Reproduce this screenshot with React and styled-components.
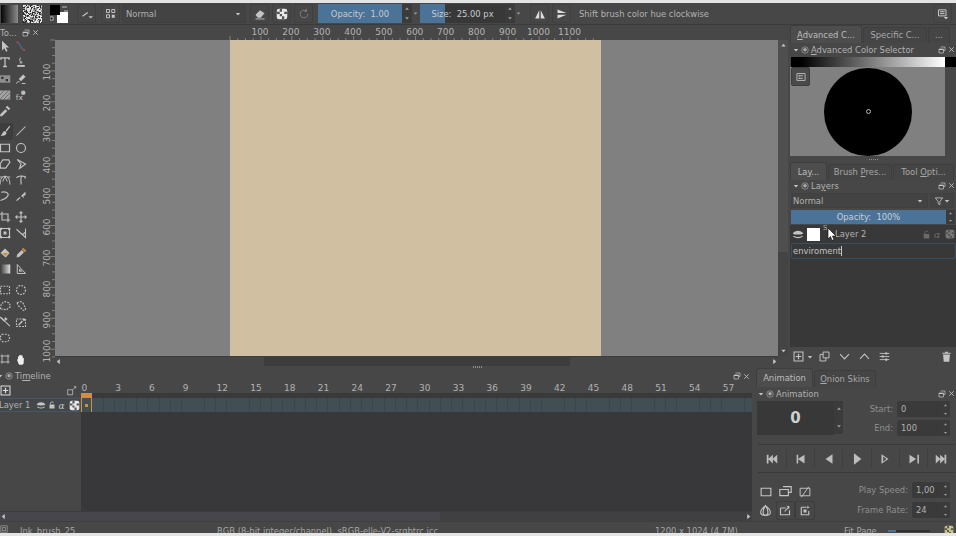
import React from "react";
import styled, { createGlobalStyle } from "styled-components";

const GlobalStyle = createGlobalStyle`
  html, body { margin: 0; padding: 0; background: #e4e4e4; }
  body { font-family: "DejaVu Sans", "Liberation Sans", sans-serif; font-size: 8.4px; color: #b2b2b2; }
  * { box-sizing: border-box; }
`;

// icon drawings, all in a 16x16 box
const L = (d, w = 1.4) => <path d={d} fill="none" stroke="currentColor" strokeWidth={w} />;
const F = (d) => <path d={d} fill="currentColor" />;
const D = (d) => <path d={d} fill="none" stroke="currentColor" strokeWidth="1.5" strokeDasharray="2.4 1.6" />;

const icons = {
  arrow: F("M4 1v13l3-3 2.4 4.6 2-1L9 10h4.4z"),
  nodes: (<><path d="M3 3c5 0 3 9 9 10" fill="none" stroke="#4a6f9c" strokeWidth="1.4" /><rect x="2" y="2" width="2.4" height="2.4" fill="#b04a42" /><rect x="11" y="12" width="2.4" height="2.4" fill="#b04a42" /></>),
  text: <>{L("M2.5 5V2.5h11V5M8 2.5V14M5.5 14h5", 1.7)}</>,
  stamp: (<>{F("M3 12h10v2.5H3z")}{L("M8 2.5c-2 0-2 3 -1 4.5v3M9 7v3", 1.3)}</>),
  ref: (<><rect x="1" y="3" width="14" height="10" fill="#8f8f8f" /><rect x="3" y="5" width="3" height="3" fill="#333" /><rect x="9" y="8" width="3" height="3" fill="#333" /></>),
  brushedit: <>{F("M11 2l3 3-6 6-3-3z")}{L("M2 14c1-3 3-3 4-2M9 14h5", 1.3)}</>,
  pattern: (<><rect x="1" y="2" width="14" height="12" fill="#a5a5a5" /><path d="M1 8l6-6M1 14L13 2M6 14l9-9M11 14l4-4" fill="none" stroke="#555" /></>),
  fx: (<><text x="1" y="15" fontSize="10" fontFamily="DejaVu Sans" fill="currentColor">fx</text><circle cx="11" cy="5" r="3" fill="#bbb" /></>),
  dropper: <>{F("M1.5 12.5l7-7 2.5 2.5-7 7H1.5z")}{F("M9 3l2-2 4 4-2 2z")}</>,
  brush: <>{F("M9 7l5-6 1 1-5 7z")}{F("M8 8c-3 0-3 4-6 6 4 1 8 0 8-4z")}</>,
  line: L("M2 14L14 2"),
  rect: L("M2 3h12v10H2z", 1.6),
  circle: <circle cx="8" cy="8" r="6" fill="none" stroke="currentColor" strokeWidth="1.5" />,
  poly: L("M5 2.5h8l1.5 3L9 13.5H2L1.5 8z", 1.5),
  polyline: L("M3 2l11 6-8 6 2-6z", 1.5),
  bez: L("M1.5 14c0-8 3-11 6.5-11s6.5 3 6.5 11M1 4h4M11 4h4M5 10l3-7 3 7", 1.3),
  freepath: L("M2 5c3-3 9-3 12-1M9 3c-3 4 0 6-1 11M13 6l1-2-2-1", 1.5),
  dyna: L("M3 3c8-2 12 3 7 7-2 2-5 3-8 4", 1.6),
  multi: <>{F("M8 8l6-6v5l-3 1 1 3z")}{L("M2 14c2-1 3-3 5-4", 1.5)}</>,
  crop: L("M4 1v11h11M1 4h11v11", 1.5),
  move: <>{L("M8 2v12M2 8h12", 1.5)}{F("M8 0l3 3H5zM8 16l-3-3h6zM0 8l3-3v6zM16 8l-3 3V5z")}</>,
  transform: (<>{L("M2 2h12v12H2z", 1.5)}{F("M6 6h4v4H6zM1 1h3v3H1zM12 1h3v3h-3zM1 12h3v3H1zM12 12h3v3h-3z")}</>),
  measure: L("M2 3l12 11V2M14 7l-4 3", 1.4),
  fill: <>{F("M8 2l6 6-5 6-7-6z")}<path d="M4 8h8l-3 4z" fill="#d08a3c" /></>,
  picker: <>{F("M2 14l1-4 6-6 3 3-6 6z")}<path d="M9 3l2-2 4 4-2 2z" fill="#d08a3c" /></>,
  grad: (<><defs><linearGradient id="gr"><stop offset="0" stopColor="#333" /><stop offset="1" stopColor="#ddd" /></linearGradient></defs><rect x="1" y="2" width="14" height="12" fill="url(#gr)" /></>),
  ruler: L("M3 14V2l11 12zM6 11V8l3 3z", 1.3),
  srect: D("M2 3h12v10H2z"),
  scirc: <circle cx="8" cy="8" r="6" fill="none" stroke="currentColor" strokeWidth="1.5" strokeDasharray="2.4 1.6" />,
  spoly: D("M2 12l1-7 5-3 6 2 1 5-5 4z"),
  sfree: D("M3 4c3-3 7-2 8 1s3 4 3 7-4 2-5 0-6-4-6-8z"),
  wand: <>{F("M1 2l6 6 1.5-1.5-6-6zM8 8l6 6 1-1-6-6z")}{F("M9 1l1 2 2 1-2 1-1 2-1-2-2-1 2-1z")}</>,
  ssimilar: <>{D("M2 4h12v10H2z")}{F("M4 12l5-6 1.5 1.5L5 13zM10 5l2-2 2 2-2 2z")}</>,
  sbez: D("M4 3h7c4 2 4 7 0 10H5C1 10 1 6 4 3z"),
  grid: L("M4 2v12M12 2v12M2 4h12M2 12h12", 1.2),
  hand: F("M4 8V5c0-1 1.500-1 1.500 0V3.500c0-1 1.500-1 1.500 0V3c0-1 1.700-1 1.700 0v1c0-1 1.600-1 1.600 0v3c.6-.8 2-.4 1.500.8L11.500 14c-.5 1-1 1.500-2 1.500H7c-1.500 0-2-.5-2.500-2L3 10c-.4-1 .6-2.300 1-2z"),
  eraser: <>{F("M2 9l6-6 6 4-5 6H5z")}{F("M2 14h12v1.200H2z")}</>,
  checker: (<><rect x="1" y="1" width="14" height="14" rx="3" fill="currentColor" /><path d="M5 1h3v4H5zM11 5h4v3h-4zM5 8h3v3H5zM1 5h4v3H1zM8 11h3v4H8z" fill="#555" /></>),
  cycle: <path d="M13 8a5 5 0 1 1-2-4M11 1.500V4.500H8" fill="none" stroke="currentColor" strokeWidth="1.2" strokeDasharray="2.200 .8" />,
  mirrorH: <>{F("M7 3v11H1.500zM9 3v11h5.500z")}</>,
  mirrorV: <>{F("M2 2l12 4.500H2zM2 9h12L2 14z")}</>,
  wsMenu: <>{L("M2 2.500h10v8H2zM4 5h6M4 7.500h6", 1.300)}{F("M9 12h6l-3 3z")}</>,
  dash: <>{L("M1.500 2.500h13v11h-13zM5 6h6M5 10h6", 1.400)}{F("M4 5h2v2H4zM4 9h2v2H4z")}</>,
  brushMode: <>{L("M2 11l7-5", 1.500)}{F("M10 11h6l-3 3z")}</>,
  palette: (<>{L("M2 2h4v4H2zM9 2h4v4H9zM2 9h4v4H2z", 1.300)}{F("M9 9h4v4H9z")}</>),
  float: <>{L("M5 2h9v7H11M2 6h9v8H2z", 1.400)}{F("M2 6h9v2H2z")}</>,
  close: L("M3 3l10 10M13 3L3 13", 2),
  dockmark: <><circle cx="8" cy="8" r="6.500" fill="none" stroke="currentColor" strokeWidth="1.300" /><circle cx="8" cy="7.500" r="3.500" fill="currentColor" /></>,
  eye: <>{F("M1 7.500c3-5 11-5 14 0-3 1.500-11 1.500-14 0z")}{L("M2 11c4 2.500 8 2.500 12 0", 1.500)}</>,
  lock: <>{F("M3 7h10v8H3z")}{L("M5 7V4c0-3 6-3 6 0", 1.500)}</>,
  alpha: <text x="1" y="14" fontSize="16" fontStyle="italic" fontFamily="DejaVu Serif" fill="currentColor">α</text>,
  filter: L("M2 3h12L9.500 8.500V14l-3-2V8.500z", 1.300),
  add: <>{L("M1.500 1.500h13v13h-13z", 1.500)}{L("M8 4v8M4 8h8", 1.800)}</>,
  dup: L("M6 1.500h8.500V10H6zM6 5H1.500v9.500H10V10", 1.400),
  down: L("M1.500 4.500L8 11.500l6.500-7", 1.500),
  up: L("M1.500 11.500L8 4.500l6.500 7", 1.500),
  props: <>{L("M1 3.500h14M1 8h14M1 12.500h14", 1.300)}{F("M9 2h3v3H9zM4 6.500h3v3H4zM9 11h3v3H9z")}</>,
  trash: <>{F("M3 5h10l-1 10.500H4zM2 2.500h12v1.500H2zM6 1h4v1.500H6z")}</>,
  zoomFit: <>{L("M1 6h8v8H1z", 1.200)}{L("M9 6l5-5M11 1h3v3", 1.200)}</>,
  first: <>{F("M2 3h2v10H2zM14 3v10L8.500 8zM9 3v10L3.500 8z")}</>,
  prevKey: <>{F("M12 3v10L4.500 8zM3 3h1.800v10H3z")}</>,
  prev: F("M12 2.500v11L4 8z"),
  play: F("M4.500 1.500v13L13 8z"),
  next: <>{F("M4 2.500v11L12 8z")}<path d="M6 5v6l3.500-3z" fill="#474747" /></>,
  nextKey: <>{F("M4 3v10l7.500-5zM13 3h1.800v10H13z")}</>,
  last: <>{F("M2 3v10l5.500-5zM7 3v10l5.500-5zM12 3h2v10h-2z")}</>,
  aRect: L("M1.500 3h13v10h-13z", 1.500),
  aDup: L("M5 2h10v7H12M1 5.500h10.500V13H1z", 1.400),
  aDel: <>{L("M1.500 3h13v10h-13z", 1.300)}{L("M3 15L13 1", 1.300)}</>,
  onion: <>{L("M8 2c-4 3-6 6-6 8s2 4 6 4 6-2 6-4-2-5-6-8zM8 2c-2 3-3 6-3 8s1 4 3 4 3-2 3-4-1-5-3-8z", 1.300)}</>,
  aMark: <>{L("M2 4h7M2 4v9h12V7", 1.500)}{F("M10 1l4 .5-.5 4zM7 8l5-5 1 1-5 5z")}</>,
  aLoop: <>{L("M3 3h7M3 3v10h10V8", 1.500)}{F("M11 1l3 2-3 2zM6 6h4v4H6z")}</>,
  status: L("M1.500 1.500h13v13h-13zM5 5h6v6H5z", 1),
  spinUp: F("M8 4l5 6H3z"),
  spinDown: F("M8 12L3 6h10z"),
  tri: F("M2 5h12l-6 7z"),
  triLeft: F("M11 2v12L4 8z"),
  triRight: F("M5 2v12l7-6z"),
};

const Icon = ({ n, s = 12, c }) => (
  <Glyph viewBox="0 0 16 16" $s={s} $c={c}>
    {icons[n]}
  </Glyph>
);

const Glyph = styled.svg`
  width: ${(p) => p.$s}px;
  height: ${(p) => p.$s}px;
  flex: none;
  color: ${(p) => p.$c || "#c4c4c4"};
`;

const Page = styled.div`
  width: 956px;
  height: 536px;
  overflow: hidden;
  display: flex;
  flex-direction: column;
  background: #474747;
  border-top: 3px solid #e4e4e4;
  border-bottom: 3px solid #e4e4e4;
`;

/* top toolbar */
const Toolbar = styled.div`
  height: 22px;
  flex: none;
  display: flex;
  align-items: center;
  padding: 0 4px 0 1px;
  background: #474747;
  border-bottom: 1px solid #3b3b3b;
`;

const Preview = styled.div`
  width: ${(p) => p.$w}px;
  height: 18px;
  margin-right: ${(p) => p.$mr || 0}px;
  background: ${(p) => p.$bg};
`;

const NoiseSwatch = styled.svg`
  width: 19px;
  height: 18px;
  flex: none;
`;

const ColorSwap = styled.svg`
  width: 18px;
  height: 18px;
  flex: none;
  margin-left: 8px;
`;

const ToolButton = styled.div`
  width: ${(p) => p.$w || 19}px;
  height: 19px;
  flex: none;
  margin-left: ${(p) => p.$ml || 0}px;
  display: flex;
  align-items: center;
  justify-content: center;
  border: 1px solid #404040;
  border-radius: 2px;
`;

const Combo = styled.div`
  height: ${(p) => p.$h || 19}px;
  width: ${(p) => p.$w}px;
  flex: none;
  margin-left: ${(p) => p.$ml || 0}px;
  padding: 0 4px 0 ${(p) => p.$pl ?? 3}px;
  display: flex;
  align-items: center;
  justify-content: space-between;
  border: 1px solid #404040;
  border-radius: 2px;
  background: #434343;
`;

const Slider = styled.div`
  width: ${(p) => p.$w}px;
  height: 19px;
  flex: none;
  margin-left: ${(p) => p.$ml || 0}px;
  display: flex;
  align-items: center;
  justify-content: center;
  color: #c6ccd2;
  background: linear-gradient(to right, #4b7397 ${(p) => p.$fill}%, #383838 ${(p) => p.$fill}%);
`;

const Spin = styled.div`
  width: ${(p) => p.$w || 10}px;
  height: ${(p) => p.$h || 19}px;
  flex: none;
  display: flex;
  flex-direction: column;
  align-items: center;
  justify-content: space-around;
  background: ${(p) => p.$bg || "#3b3b3b"};
`;

const SmallArrow = styled.div`
  width: 6px;
  flex: none;
  margin-right: ${(p) => p.$mr || 0}px;
  display: flex;
  justify-content: center;
`;

const Hint = styled.span`
  margin-left: 8px;
  flex: 1;
`;

/* upper part */
const Upper = styled.div`
  height: 343px;
  flex: none;
  display: flex;
  position: relative;
`;

const ToolDock = styled.div`
  width: 41px;
  flex: none;
  overflow: hidden;
`;

const DockTitle = styled.div`
  height: ${(p) => p.$h || 13}px;
  margin-left: ${(p) => p.$ml || 0}px;
  padding: ${(p) => p.$pad || "0 2px 0 3px"};
  display: flex;
  align-items: center;
  gap: ${(p) => p.$gap || 2}px;
  white-space: nowrap;
`;

const TitleFill = styled.span`
  flex: 1;
`;

const ToolGroups = styled.div`
  display: flex;
  flex-direction: column;
  gap: 4px;
  margin-left: -3px;
`;

const ToolGroup = styled.div`
  display: grid;
  grid-template-columns: 16px 16px;
  grid-auto-rows: 16.25px;
`;

const ToolCell = styled.div`
  display: flex;
  align-items: center;
  justify-content: center;
  border-radius: 2px;
  background: ${(p) => (p.$active ? "#3d3d3d" : "transparent")};
`;

const CanvasPane = styled.div`
  width: 749px;
  flex: none;
  display: flex;
  flex-direction: column;
`;

const TopRuler = styled.svg`
  width: 739px;
  height: 15px;
  flex: none;
  display: block;
`;

const CanvasRow = styled.div`
  height: 316px;
  flex: none;
  display: flex;
`;

const LeftRuler = styled.svg`
  width: 14px;
  height: 316px;
  flex: none;
  overflow: visible;
`;

const View = styled.div`
  width: 723px;
  flex: none;
  padding-left: 175px;
  background: #808080;
`;

const Sheet = styled.div`
  width: 371px;
  height: 100%;
  background: #d1bfa1;
`;

const VScroll = styled.div`
  width: 10px;
  flex: none;
  display: flex;
  flex-direction: column;
  align-items: center;
  justify-content: space-between;
  padding: 2px 0;
  background: linear-gradient(#4f4f4f 67%, #444 67%);
`;

const HScroll = styled.div`
  height: ${(p) => p.$h || 10}px;
  flex: none;
  margin: 0 ${(p) => p.$mr || 0}px 0 ${(p) => p.$ml || 0}px;
  display: flex;
  align-items: center;
  justify-content: space-between;
  background: ${(p) => p.$bg};
  border-top: 1px solid #3c3c3c;
`;

const Dots = styled.div`
  position: absolute;
  left: ${(p) => p.$x}px;
  top: ${(p) => p.$y}px;
  width: 9px;
  height: 2px;
  background: repeating-linear-gradient(to right, #8a8a8a 0 1px, transparent 1px 2px);
`;

/* right docks */
const RightDock = styled.div`
  width: 166px;
  flex: none;
  display: flex;
  flex-direction: column;
`;

const Tabs = styled.div`
  height: ${(p) => p.$h || 18}px;
  flex: none;
  padding-left: ${(p) => p.$pl || 0}px;
  display: flex;
  gap: 1px;
  align-items: flex-end;
`;

const Tab = styled.div`
  width: ${(p) => p.$w}px;
  height: ${(p) => (p.$active ? 100 : 90)}%;
  flex: none;
  display: flex;
  align-items: center;
  justify-content: center;
  white-space: nowrap;
  border: 1px solid #3e3e3e;
  border-bottom: none;
  border-radius: 3px 3px 0 0;
  background: ${(p) => (p.$active ? "#4d4d4d" : "#454545")};
  color: ${(p) => (p.$active ? "#bdbdbd" : "#a8a8a8")};
`;

const Under = styled.u`
  text-underline-offset: 1px;
`;

const SelectorBar = styled.div`
  height: 10px;
  flex: none;
  margin: 1px 0 0 1px;
  background: linear-gradient(to right, #000 0, #000 10px, #fff 154px, #000 154px, #000 165px);
`;

const SelectorArea = styled.div`
  height: 89px;
  width: 155px;
  flex: none;
  position: relative;
  display: flex;
  align-items: center;
  justify-content: center;
  background: #808080;
`;

const Wheel = styled.div`
  width: 88px;
  height: 88px;
  border-radius: 50%;
  margin-left: 1px;
  background: #000;
  display: flex;
  align-items: center;
  justify-content: center;
`;

const WheelRing = styled.div`
  width: 5px;
  height: 5px;
  border-radius: 50%;
  border: 1px solid #b5b5b5;
`;

const FloatButton = styled.div`
  position: absolute;
  left: 1px;
  top: 0;
  width: 19px;
  height: 19px;
  display: flex;
  align-items: center;
  justify-content: center;
  background: #4a4a4a;
  border: 1px solid #3d3d3d;
  border-radius: 2px;
`;

const Handle = styled.div`
  height: 6px;
  flex: none;
  display: flex;
  align-items: center;
  justify-content: center;
`;

const HandleDots = styled.div`
  width: 9px;
  height: 1px;
  background: repeating-linear-gradient(to right, #8a8a8a 0 1px, transparent 1px 2px);
`;

const ComboRow = styled.div`
  height: 15px;
  flex: none;
  padding: 0 1px;
  display: flex;
  gap: 2px;
`;

const OpacityRow = styled.div`
  height: 14px;
  flex: none;
  margin: 2px 1px 1px;
  display: flex;
`;

const OpacityBar = styled.div`
  flex: 1;
  display: flex;
  align-items: center;
  justify-content: center;
  background: #4b7397;
  color: #c9d0d6;
`;

const LayerList = styled.div`
  height: 122px;
  flex: none;
  background: #383838;
`;

const LayerRow = styled.div`
  height: 18px;
  position: relative;
  display: flex;
  align-items: center;
  padding-left: 2px;
`;

const Thumb = styled.div`
  width: 13px;
  height: 13px;
  margin-left: 3px;
  background: #fff;
`;

const LayerName = styled.span`
  margin-left: 15px;
  flex: 1;
`;

const Cursor = styled.svg`
  position: absolute;
  left: 37px;
  top: 3px;
  width: 9px;
  height: 13px;
`;

const TypeMark = styled.span`
  position: absolute;
  left: 33px;
  top: -1px;
  font-size: 7px;
`;

const RowIcons = styled.div`
  display: flex;
  gap: ${(p) => p.$gap || 2}px;
  align-items: center;
  margin-right: ${(p) => p.$mr || 0}px;
`;

const RenameBox = styled.div`
  height: 16px;
  margin: 0 0 0 1px;
  padding-left: 1px;
  display: flex;
  align-items: center;
  color: #c4c4c4;
  border: 1px solid #3a4f60;
  border-radius: 2px;
`;

const Caret = styled.span`
  width: 1px;
  height: 10px;
  background: #c4c4c4;
`;

const LayerActions = styled.div`
  height: 17px;
  flex: none;
  display: flex;
  align-items: center;
  padding: 2px 5px 0 3px;
`;

const ActionIcon = styled.div`
  margin-left: ${(p) => p.$ml || 0}px;
  display: flex;
`;

/* lower part */
const Lower = styled.div`
  height: 153px;
  flex: none;
  display: flex;
  gap: 3px;
  position: relative;
`;

const TimelineDock = styled.div`
  width: 752px;
  flex: none;
  display: flex;
  flex-direction: column;
`;

const TimeHead = styled.div`
  height: 15px;
  flex: none;
  display: flex;
`;

const TimeHeadLeft = styled.div`
  width: 81px;
  flex: none;
  display: flex;
  justify-content: space-between;
  align-items: center;
  padding: 0 4px 0 0;
`;

const TimeRuler = styled.div`
  flex: 1;
  position: relative;
  display: flex;
  overflow: hidden;
  background: linear-gradient(#474747 10px, #3a3a3a 10px);
`;

const FrameLabel = styled.span`
  width: 33.75px;
  flex: none;
  line-height: 9px;
  padding-left: 0.5px;
  padding-top: 1px;
  font-size: 9px;
`;

const PlayHead = styled.div`
  position: absolute;
  left: 0;
  top: 10px;
  width: 11px;
  height: 5px;
  background: #d18f3a;
`;

const TimeLayer = styled.div`
  height: 14px;
  flex: none;
  display: flex;
`;

const TimeLayerLeft = styled.div`
  width: 81px;
  flex: none;
  display: flex;
  align-items: center;
  justify-content: space-between;
  padding-right: 0;
  color: #b2b2b2;
  background: #43474a;
  border: 1px solid #42586a;
  border-left: none;
  white-space: nowrap;
`;

const ClippedName = styled.span`
  margin-left: -1px;
`;

const Frames = styled.div`
  flex: 1;
  background: repeating-linear-gradient(to right, #414f55 0 10.25px, #3a4649 10.25px 11.25px);
`;

const CurrentFrame = styled.div`
  width: 11px;
  height: 100%;
  display: flex;
  align-items: center;
  justify-content: center;
  border-left: 1px solid #d18f3a;
  border-right: 1px solid #d18f3a;
`;

const Keyframe = styled.div`
  width: 3px;
  height: 3px;
  background: #d18f3a;
`;

const TimeEmpty = styled.div`
  flex: 1;
  display: flex;
`;

const EmptyLeft = styled.div`
  width: 81px;
  flex: none;
`;

const EmptyRight = styled.div`
  flex: 1;
  background: #38383a;
`;

const AnimDock = styled.div`
  width: 201px;
  flex: none;
  display: flex;
  flex-direction: column;
`;

const AnimTop = styled.div`
  height: 34px;
  flex: none;
  margin-top: 1px;
  padding: 0 6px 0 2px;
  display: flex;
  justify-content: space-between;
`;

const FrameBox = styled.div`
  width: 86px;
  display: flex;
`;

const FrameValue = styled.div`
  flex: 1;
  display: flex;
  align-items: center;
  justify-content: center;
  font-size: 15px;
  font-weight: bold;
  color: #d0d0d0;
  background: #383838;
`;

const Fields = styled.div`
  display: flex;
  flex-direction: column;
  gap: ${(p) => p.$gap || 2}px;
`;

const Field = styled.div`
  height: 16px;
  display: flex;
  align-items: center;
  justify-content: flex-end;
  gap: ${(p) => p.$gap || 4}px;
`;

const Dim = styled.span`
  color: #8f8f8f;
  white-space: nowrap;
`;

const Input = styled.div`
  width: ${(p) => p.$w}px;
  height: 16px;
  padding-left: 4px;
  display: flex;
  align-items: center;
  justify-content: space-between;
  border-radius: 2px;
  background: #3a3a3a;
`;

const Transport = styled.div`
  height: 29px;
  flex: none;
  margin: 9px 0 0 3px;
  width: 197px;
  display: flex;
  align-items: center;
  justify-content: space-between;
  border-top: 1px solid #3b3b3b;
  border-bottom: 1px solid #3b3b3b;
`;

const TransportCell = styled.div`
  width: 28px;
  height: 19px;
  display: flex;
  align-items: center;
  justify-content: center;
  border-left: ${(p) => (p.$first ? "none" : "1px solid #3f3f3f")};
`;

const AnimBottom = styled.div`
  flex: 1;
  margin-top: 9px;
  padding: 0 6px 0 1px;
  display: flex;
  justify-content: space-between;
`;

const IconGrid = styled.div`
  display: grid;
  grid-template-columns: repeat(3, 19.5px);
  grid-auto-rows: 19px;
`;

const IconCell = styled.div`
  display: flex;
  align-items: center;
  justify-content: center;
  border-radius: 2px;
  border: 1px solid ${(p) => (p.$boxed ? "#3d3d3d" : "transparent")};
`;

/* status bar */
const StatusBar = styled.div`
  height: 12px;
  flex: none;
  padding-top: 3px;
  display: flex;
  position: relative;
  overflow: hidden;
  line-height: 12px;
  color: #a6a6a6;
  border-top: 1px solid #3f3f3f;
`;

const StatusCell = styled.span`
  width: ${(p) => p.$w}px;
  flex: none;
  display: flex;
  align-items: flex-start;
  white-space: pre;
`;

const ZoomTrack = styled.div`
  width: 42px;
  height: 2px;
  margin: 5px 14px 0 0;
  background: linear-gradient(to right, #4b7397 20%, #2f2f2f 20%);
`;

const frameLabels = Array.from({ length: 20 }, (_, i) => i * 3);
const rulerMarks = Array.from({ length: 11 }, (_, i) => (i + 1) * 100);
const ticks = Array.from({ length: 57 }, (_, i) => i);

const toolGroups = [
  [["arrow", "nodes"], ["text", "stamp"], ["ref", "brushedit"], ["pattern", "fx"], ["dropper", null]],
  [["brush", "line"], ["rect", "circle"], ["poly", "polyline"], ["bez", "freepath"], ["dyna", "multi"]],
  [["crop", "move"], ["transform", "measure"]],
  [["fill", "picker"], ["grad", "ruler"]],
  [["srect", "scirc"], ["spoly", "sfree"], ["wand", "ssimilar"], ["sbez", null]],
  [["grid", "hand"]],
];

// dither noise for the pattern preview, a small fixed generator so it stays the same
const noise = [];
let seed = 7;
for (let y = 0; y < 18; y++) {
  for (let x = 0; x < 19; x++) {
    seed = (seed * 75 + 74) % 65537;
    noise.push({ x, y, v: seed % 3 });
  }
}
const noiseFill = ["#2a2a2a", "#8c8c8c", "#e6e6e6"];

const mainHandle = "linear-gradient(to right, #474747 28.9%, #3d3d3d 28.9%, #3d3d3d 71.2%, #474747 71.2%)";
const timeHandle = "linear-gradient(to right, #46464c 58.5%, #404042 58.5%)";

function Steppers({ w, h, bg, size = 6 }) {
  return (
    <Spin $w={w} $h={h} $bg={bg}>
      <Icon n="spinUp" s={size} c="#a0a0a0" />
      <Icon n="spinDown" s={size} c="#a0a0a0" />
    </Spin>
  );
}

function DockHead({ title, pad }) {
  return (
    <DockTitle $pad={pad}>
      <Icon n="tri" s={6} />
      <Icon n="dockmark" s={8} c="#aaa" />
      <span>{title}</span>
      <TitleFill />
      <Icon n="float" s={8} />
      <Icon n="close" s={7} />
    </DockTitle>
  );
}

function App() {
  return (
    <>
      <GlobalStyle />
      <Page>
        <Toolbar>
          <Preview $w={17} $mr={5} $bg="linear-gradient(to right, #050505, #8c8c8c)" />
          <NoiseSwatch viewBox="0 0 19 18">
            {noise.map((d, i) => (
              <rect key={i} x={d.x} y={d.y} width="1" height="1" fill={noiseFill[d.v]} />
            ))}
          </NoiseSwatch>
          <ColorSwap viewBox="0 0 18 18">
            <rect x="7" y="7" width="11" height="11" fill="#fff" />
            <rect x="0" y="0" width="10" height="10" fill="#000" />
            <path d="M12 2h5M14 6h4" stroke="#bbb" />
            <rect x="0" y="12" width="3" height="3" fill="#000" stroke="#ddd" strokeWidth=".8" />
          </ColorSwap>
          <ToolButton $ml={9}><Icon n="brushMode" /></ToolButton>
          <ToolButton $ml={5}><Icon n="palette" /></ToolButton>
          <Combo $w={124} $ml={2}>
            <span>Normal</span>
            <Icon n="tri" s={6} />
          </Combo>
          <ToolButton $ml={4}><Icon n="eraser" /></ToolButton>
          <ToolButton $ml={3}><Icon n="checker" c="#e8e8e8" /></ToolButton>
          <ToolButton $ml={3}><Icon n="cycle" c="#999" /></ToolButton>
          <Slider $w={84} $ml={5} $fill={100}>Opacity:&nbsp; 1.00</Slider>
          <Steppers />
          <SmallArrow $mr={2}><Icon n="tri" s={5} c="#999" /></SmallArrow>
          <Slider $w={85} $fill={29}>Size:&nbsp; 25.00 px</Slider>
          <Steppers />
          <SmallArrow><Icon n="tri" s={5} c="#999" /></SmallArrow>
          <ToolButton $ml={9}><Icon n="mirrorH" c="#ddd" /></ToolButton>
          <ToolButton $ml={3}><Icon n="mirrorV" c="#ddd" /></ToolButton>
          <Hint>Shift brush color hue clockwise</Hint>
          <ToolButton><Icon n="wsMenu" c="#ccc" /></ToolButton>
        </Toolbar>

        <Upper>
          <ToolDock>
            <DockTitle $pad="2px 2px 0 0" $h={13}>
              <span>To...</span>
              <TitleFill />
              <Icon n="float" s={8} />
              <Icon n="close" s={7} />
            </DockTitle>
            <ToolGroups>
              {toolGroups.map((group, g) => (
                <ToolGroup key={g}>
                  {group.flat().map((name, i) => (
                    <ToolCell key={i} $active={name === "brush"}>
                      {name && <Icon n={name} s={12} c={name === "hand" ? "#eee" : undefined} />}
                    </ToolCell>
                  ))}
                </ToolGroup>
              ))}
            </ToolGroups>
          </ToolDock>

          <CanvasPane>
            <TopRuler viewBox="0 0 739 15">
              {ticks.slice(0, 48).map((i) => (
                <line key={i} x1={189 + i * 7.73} x2={189 + i * 7.73} y1={i % 4 === 0 ? 11 : 13} y2="15" stroke="#9a9a9a" strokeWidth=".7" />
              ))}
              {rulerMarks.map((m, i) => (
                <text key={m} x={219 + i * 30.95} y="10" fontSize="9" fill="#b4b4b4" textAnchor="middle" fontFamily="DejaVu Sans">{m}</text>
              ))}
            </TopRuler>
            <CanvasRow>
              <LeftRuler viewBox="0 0 14 316">
                {ticks.slice(0, 42).map((i) => (
                  <line key={i} x1={i % 4 === 0 ? 9 : 11} x2="14" y1={i * 7.73} y2={i * 7.73} stroke="#9a9a9a" strokeWidth=".7" />
                ))}
                {rulerMarks.slice(0, 10).map((m, i) => (
                  <text key={m} transform={`translate(9 ${32 + i * 31}) rotate(-90)`} fontSize="9" fill="#b4b4b4" textAnchor="middle" fontFamily="DejaVu Sans">{m}</text>
                ))}
              </LeftRuler>
              <View><Sheet /></View>
              <VScroll>
                <Icon n="spinUp" s={7} />
                <Icon n="spinDown" s={7} />
              </VScroll>
            </CanvasRow>
            <HScroll $ml={14} $mr={12} $bg={mainHandle}>
              <Icon n="triLeft" s={7} />
              <Icon n="triRight" s={7} />
            </HScroll>
          </CanvasPane>

          <RightDock>
            <Tabs>
              <Tab $w={72} $active><span><Under>A</Under>dvanced C...</span></Tab>
              <Tab $w={64}>Specific C...</Tab>
              <Tab $w={22}>...</Tab>
            </Tabs>
            <DockHead title={<><Under>A</Under>dvanced Color Selector</>} pad="0 1px 0 3px" />
            <SelectorBar />
            <SelectorArea>
              <FloatButton><Icon n="dash" s={10} /></FloatButton>
              <Wheel><WheelRing /></Wheel>
            </SelectorArea>
            <Handle><HandleDots /></Handle>
            <Tabs>
              <Tab $w={37} $active><span>La<Under>y</Under>...</span></Tab>
              <Tab $w={64}><span>Brush <Under>P</Under>res...</span></Tab>
              <Tab $w={61}><span>Tool <Under>O</Under>pti...</span></Tab>
            </Tabs>
            <DockHead title={<>La<Under>y</Under>ers</>} pad="0 1px 2px 3px" />
            <ComboRow>
              <Combo $w={137} $h={15} $pl={1}><span>Normal</span><Icon n="tri" s={6} /></Combo>
              <Combo $w={24} $h={15}><Icon n="filter" s={10} /><Icon n="tri" s={6} /></Combo>
            </ComboRow>
            <OpacityRow>
              <OpacityBar>Opacity:&nbsp; 100%</OpacityBar>
              <Steppers w={9} h={14} size={5} />
            </OpacityRow>
            <LayerList>
              <LayerRow>
                <Icon n="eye" s={12} />
                <Thumb />
                <TypeMark>S</TypeMark>
                <Cursor viewBox="0 0 9 13">
                  <path d="M1 0v11l2.500-2.500 1.500 4 2-1-1.500-3.500H9z" fill="#fff" stroke="#000" strokeWidth=".6" />
                </Cursor>
                <LayerName>Layer 2</LayerName>
                <RowIcons $mr={1}>
                  <Icon n="lock" s={9} c="#6a6a6a" />
                  <Icon n="alpha" s={10} c="#6a6a6a" />
                  <Icon n="checker" s={10} c="#777" />
                </RowIcons>
              </LayerRow>
              <RenameBox>enviroment<Caret /></RenameBox>
            </LayerList>
            <LayerActions>
              <Icon n="add" s={11} />
              <ActionIcon $ml={3}><Icon n="tri" s={6} /></ActionIcon>
              <ActionIcon $ml={6}><Icon n="dup" s={11} /></ActionIcon>
              <ActionIcon $ml={9}><Icon n="down" s={11} /></ActionIcon>
              <ActionIcon $ml={9}><Icon n="up" s={11} /></ActionIcon>
              <ActionIcon $ml={9}><Icon n="props" s={11} /></ActionIcon>
              <ActionIcon $ml={51}><Icon n="trash" s={11} /></ActionIcon>
            </LayerActions>
          </RightDock>
          <Dots $x={473} $y={341} />
        </Upper>

        <Lower>
          <TimelineDock>
            <DockTitle $pad="1px 2px 0 0" $h={15} $gap={2} $ml={-3}>
              <Icon n="tri" s={6} />
              <Icon n="dockmark" s={8} c="#aaa" />
              <span>Ti<Under>m</Under>eline</span>
              <TitleFill />
              <Icon n="float" s={8} />
              <Icon n="close" s={7} />
            </DockTitle>
            <TimeHead>
              <TimeHeadLeft>
                <Icon n="add" s={11} c="#ddd" />
                <Icon n="zoomFit" s={10} />
              </TimeHeadLeft>
              <TimeRuler>
                {frameLabels.map((f) => (
                  <FrameLabel key={f}>{f}</FrameLabel>
                ))}
                <PlayHead />
              </TimeRuler>
            </TimeHead>
            <TimeLayer>
              <TimeLayerLeft>
                <ClippedName>Layer 1</ClippedName>
                <RowIcons $gap={2}>
                  <Icon n="eye" s={10} />
                  <Icon n="lock" s={8} />
                  <Icon n="alpha" s={9} />
                  <Icon n="checker" s={11} c="#e8e8e8" />
                </RowIcons>
              </TimeLayerLeft>
              <Frames>
                <CurrentFrame><Keyframe /></CurrentFrame>
              </Frames>
            </TimeLayer>
            <TimeEmpty>
              <EmptyLeft />
              <EmptyRight />
            </TimeEmpty>
            <HScroll $h={10} $bg={timeHandle}>
              <Icon n="triLeft" s={7} />
              <Icon n="triRight" s={7} />
            </HScroll>
          </TimelineDock>

          <AnimDock>
            <Tabs $h={19} $pl={1}>
              <Tab $w={57} $active>Animation</Tab>
              <Tab $w={62}><span><Under>O</Under>nion Skins</span></Tab>
            </Tabs>
            <DockHead title="Animation" pad="0 1px 0 3px" />
            <AnimTop>
              <FrameBox>
                <FrameValue>0</FrameValue>
                <Steppers w={9} h={33} size={6} />
              </FrameBox>
              <Fields $gap={3}>
                <Field>
                  <Dim>Start:</Dim>
                  <Input $w={53}>0<Steppers w={9} h={16} size={5} /></Input>
                </Field>
                <Field>
                  <Dim>End:</Dim>
                  <Input $w={53}>100<Steppers w={9} h={16} size={5} /></Input>
                </Field>
              </Fields>
            </AnimTop>
            <Transport>
              {["first", "prevKey", "prev", "play", "next", "nextKey", "last"].map((n, i) => (
                <TransportCell key={n} $first={i === 0}>
                  <Icon n={n} s={14} c="#bdbdbd" />
                </TransportCell>
              ))}
            </Transport>
            <AnimBottom>
              <IconGrid>
                <IconCell><Icon n="aRect" s={12} /></IconCell>
                <IconCell><Icon n="aDup" s={13} /></IconCell>
                <IconCell><Icon n="aDel" s={12} /></IconCell>
                <IconCell><Icon n="onion" s={13} /></IconCell>
                <IconCell $boxed><Icon n="aMark" s={12} /></IconCell>
                <IconCell $boxed><Icon n="aLoop" s={12} /></IconCell>
              </IconGrid>
              <Fields $gap={4}>
                <Field $gap={4}>
                  <Dim>Play Speed:</Dim>
                  <Input $w={38}>1,00<Steppers w={9} h={16} size={5} /></Input>
                </Field>
                <Field $gap={4}>
                  <Dim>Frame Rate:</Dim>
                  <Input $w={38}>24<Steppers w={9} h={16} size={5} /></Input>
                </Field>
              </Fields>
            </AnimBottom>
          </AnimDock>
        </Lower>

        <StatusBar>
          <StatusCell $w={20}><Icon n="status" s={8} /></StatusCell>
          <StatusCell $w={197}>Ink_brush_25</StatusCell>
          <StatusCell $w={438}>RGB (8-bit integer/channel)  sRGB-elle-V2-srgbtrc.icc</StatusCell>
          <StatusCell $w={189}>1200 x 1024 (4.7M)</StatusCell>
          <StatusCell $w={44}>Fit Page</StatusCell>
          <ZoomTrack />
          <Icon n="checker" s={10} c="#c9c08a" />
        </StatusBar>
      </Page>
    </>
  );
}

export default App;
